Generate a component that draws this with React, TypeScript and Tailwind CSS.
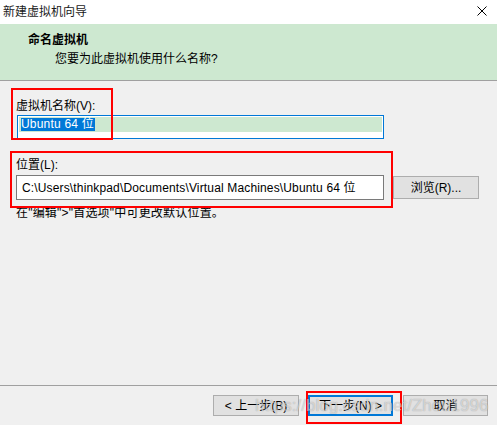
export default function App() {
  return (
    <div className="relative w-[497px] h-[425px] overflow-hidden bg-[#f0f0f0] text-[12px] text-black font-['Liberation_Sans','Noto_Sans_CJK_SC',sans-serif]">
      {/* Title bar */}
      <div className="flex h-[24px] items-center justify-between bg-white pl-[3px] pr-[10px]">
        <span className="leading-[16px] text-[#1a1a1a]">新建虚拟机向导</span>
        <svg width="10" height="10" viewBox="0 0 10 10" className="mt-[-2px]">
          <path d="M0.5 0.5 L9.5 9.5 M9.5 0.5 L0.5 9.5" stroke="#000" strokeWidth="1" fill="none" />
        </svg>
      </div>

      {/* Header */}
      <div className="h-[57px] border-b border-[#a0a0a0] bg-[#cde8d0] pt-[8px]">
        <div className="pl-[28px] font-bold leading-[16px]">命名虚拟机</div>
        <div className="mt-[3px] pl-[55px] leading-[16px]">您要为此虚拟机使用什么名称?</div>
      </div>

      {/* Body */}
      <div className="h-[304px] pl-[16px] pt-[17px]">
        <div className="leading-[16px]">虚拟机名称(V):</div>
        <div className="ml-[1px] mt-[1px] h-[24px] w-[367px] border border-[#0078d7] bg-white p-[1px]">
          <div className="flex h-[15px] items-start bg-[#cde8d0] pl-[2px]">
            <span className="mt-[1px] bg-[#0078d7] pr-[1px] text-[12px] leading-[13px] tracking-[0.2px] text-white">Ubuntu 64 位</span>
          </div>
        </div>

        <div className="mt-[18px] leading-[16px]">位置(L):</div>
        <div className="mt-[2px] flex items-center gap-[9px]">
          <div className="flex h-[25px] w-[368px] items-center border border-[#7a7a7a] bg-white pl-[5px]">
            <span className="leading-[16px] tracking-[0.15px]">C:\Users\thinkpad\Documents\Virtual Machines\Ubuntu 64 位</span>
          </div>
          <button className="h-[23px] w-[86px] border border-[#adadad] bg-[#e1e1e1] leading-[16px]">浏览(R)...</button>
        </div>

        <div className="mt-[5px] leading-[16px] tracking-[0.2px]">在"编辑"&gt;"首选项"中可更改默认位置。</div>
      </div>

      {/* Footer */}
      <div className="h-[1px] bg-[#a0a0a0]" />
      <div className="flex gap-[9px] pl-[213px] pt-[9px]">
        <button className="h-[21px] w-[86px] border border-[#adadad] bg-[#e1e1e1] leading-[16px]">&lt; 上一步(B)</button>
        <button className="h-[21px] w-[85px] border-2 border-[#0078d7] bg-[#e1e1e1] leading-[16px]">下一步(N) &gt;</button>
        <button className="ml-[1px] h-[21px] w-[85px] border border-[#adadad] bg-[#e1e1e1] leading-[16px]">取消</button>
      </div>

      {/* Annotation boxes */}
      <div className="pointer-events-none absolute left-[11px] top-[88px] h-[52px] w-[102px] border-2 border-[#ff0000]" />
      <div className="pointer-events-none absolute left-[10px] top-[151px] h-[57px] w-[383px] border-2 border-[#ff0000]" />
      <div className="pointer-events-none absolute left-[306px] top-[391px] h-[33px] w-[96px] border-2 border-[#ff0000]" />

      {/* Watermark */}
      <div className="pointer-events-none absolute left-[255px] top-[396px] text-[17px] leading-[20px] text-[rgba(255,255,255,0.55)] [text-shadow:0_0_1px_rgba(0,0,0,0.35)]">
        https://blog.csdn.net/Zhou1996
      </div>
    </div>
  )
}
